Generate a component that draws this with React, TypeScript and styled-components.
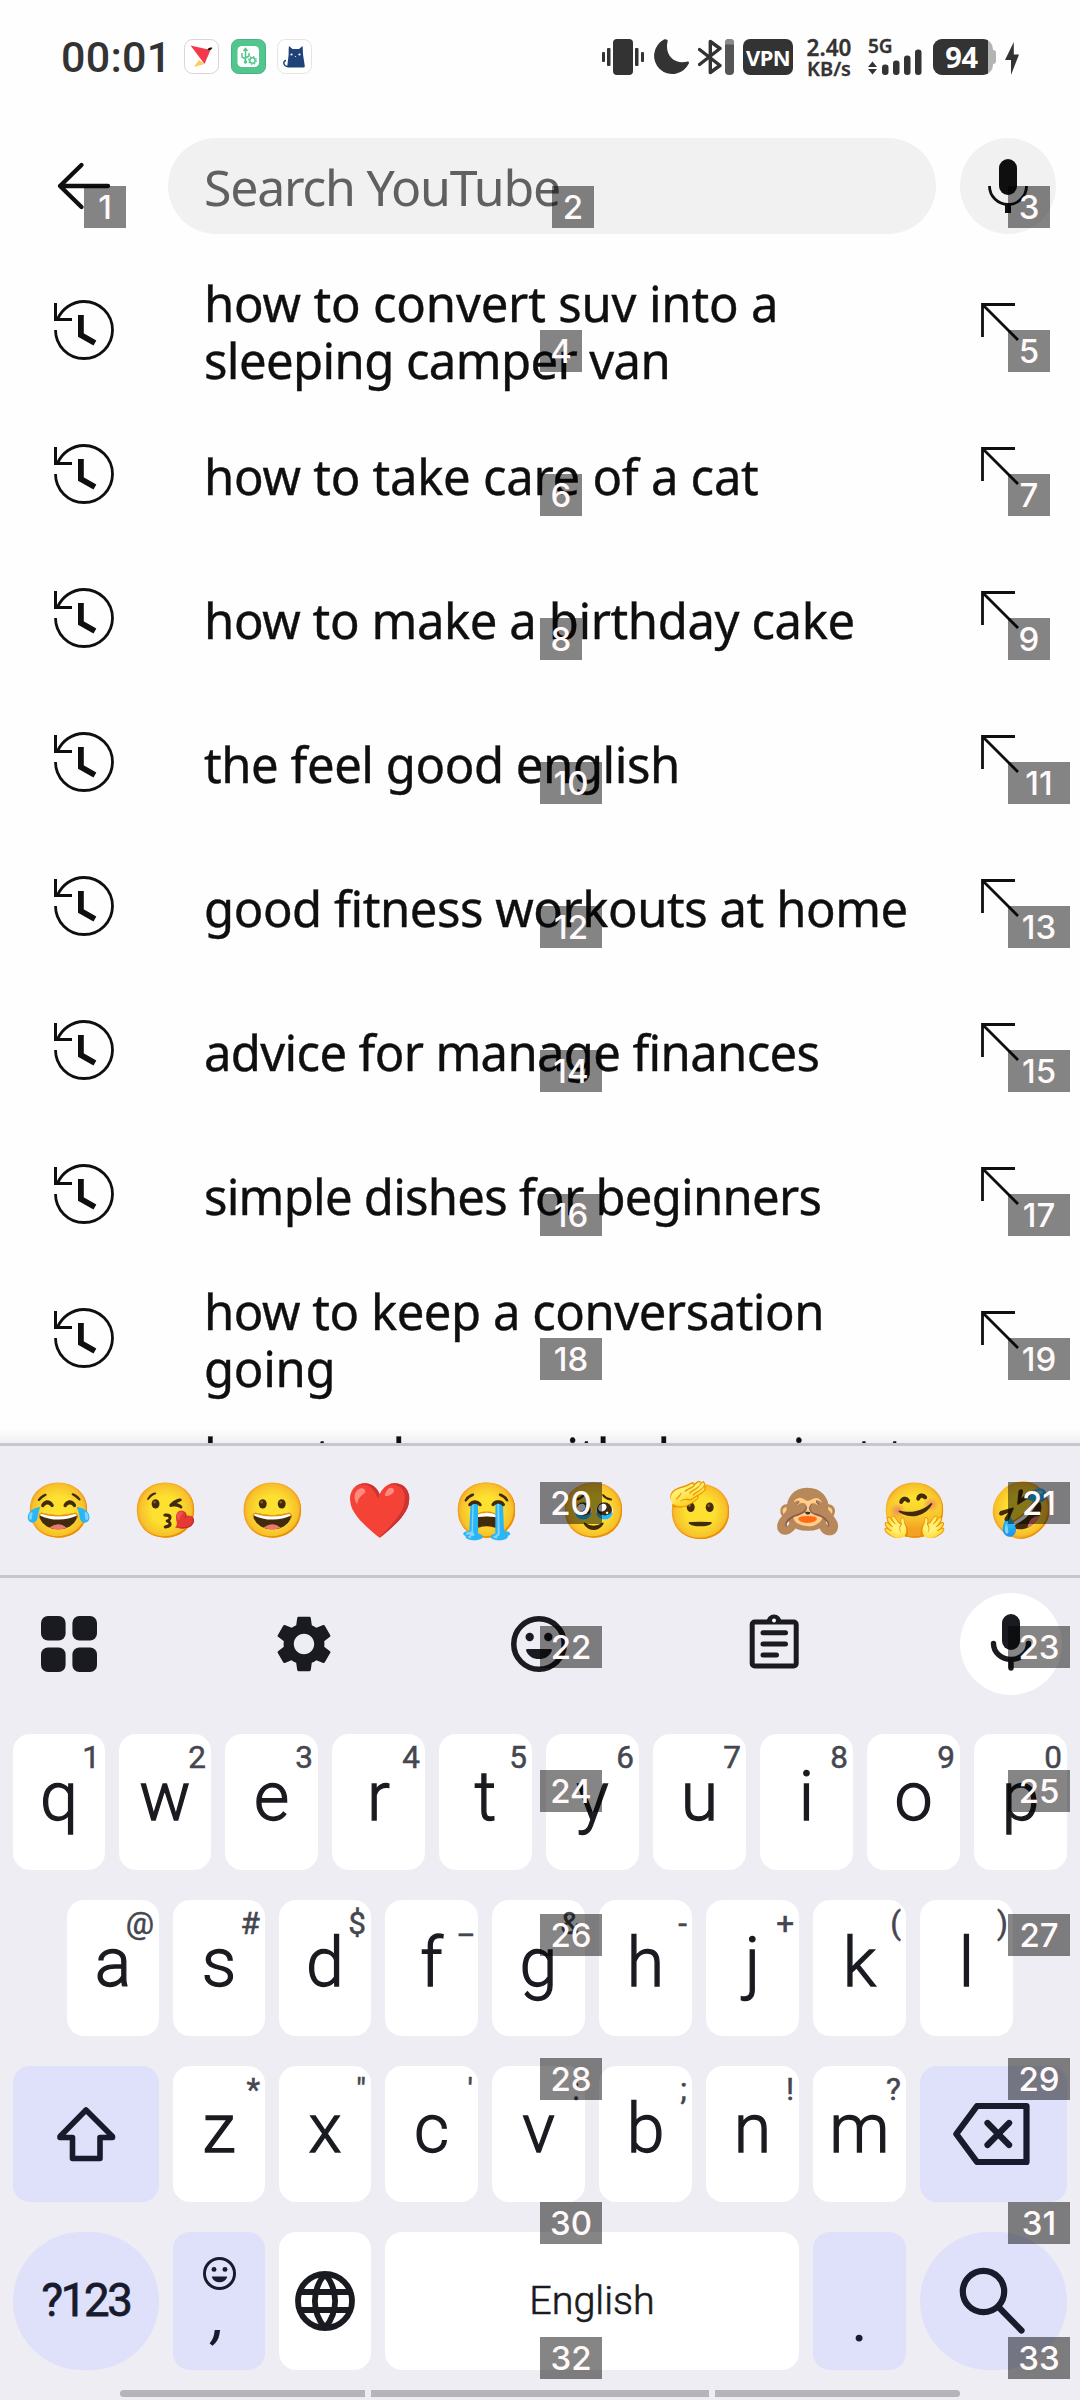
import React from 'react';
import styled, { createGlobalStyle } from 'styled-components';
import { MdSettings } from 'react-icons/md';

const GlobalStyle = createGlobalStyle`
  * { box-sizing: border-box; }
  html, body { margin: 0; padding: 0; background: #fff; }
  svg { display: block; flex: none; }
`;

const Screen = styled.main`
  position: relative;
  width: 1080px;
  height: 2400px;
  display: flex;
  flex-direction: column;
  overflow: hidden;
  background: #fefefe;
  color: #0f0f0f;
  font-family: 'Noto Sans', sans-serif;
`;

/* ---------- status bar ---------- */

const StatusBar = styled.header`
  height: 114px;
  padding: 39px 61px 0 61px;
  display: flex;
  align-items: flex-start;
  color: #333;
`;

const Clock = styled.div`
  width: 123px;
  font: 500 43px/36px Roboto, sans-serif;
  letter-spacing: 0.3px;
`;

const AppIcons = styled.div`
  display: flex;
  gap: 11.5px;
`;

const StatusIcons = styled.div`
  flex: 1;
  display: flex;
  justify-content: flex-end;
  align-items: flex-start;
  height: 36px;
`;

const StatusItem = styled.div<{ $gap: number }>`
  margin-left: ${(p) => p.$gap}px;
`;

const VpnTag = styled.div`
  width: 50px;
  height: 36px;
  border-radius: 7px;
  background: #333;
  color: #fff;
  font: 700 22px/36px 'Noto Sans', sans-serif;
  letter-spacing: -0.6px;
  text-align: center;
`;

const Speed = styled.div`
  width: 48px;
  display: flex;
  flex-direction: column;
  align-items: center;
  font: 600 22.5px/17px 'Noto Sans', sans-serif;
  -webkit-text-stroke: 0.3px #333;
  span + span { font-size: 20px; line-height: 20px; margin-top: 3px; }
`;

const Signal = styled.div`
  width: 54px;
  height: 36px;
  display: flex;
  flex-direction: column;
  justify-content: space-between;
  font: 600 19px/14px 'Noto Sans', sans-serif;
  -webkit-text-stroke: 0.3px #333;
  svg { margin-top: -4px; }
`;

const Battery = styled.div`
  display: flex;
  align-items: center;
  height: 36px;
`;

const BatteryShell = styled.div`
  width: 60px;
  height: 36px;
  border-radius: 9px 10px 10px 9px;
  overflow: hidden;
  background: #b3b3b3;
`;

const BatteryFill = styled.div`
  width: 55px;
  height: 36px;
  padding-left: 2px;
  background: #333;
  color: #fff;
  font: 700 29px/36px 'Noto Sans', sans-serif;
  letter-spacing: -0.4px;
  text-align: center;
`;

const BatteryNub = styled.div`
  width: 3px;
  height: 14px;
  border-radius: 0 3px 3px 0;
  background: #b3b3b3;
`;

/* ---------- search header ---------- */

const SearchHeader = styled.div`
  height: 144px;
  padding: 24px 24px 24px 48px;
  display: flex;
  align-items: center;
`;

const SearchField = styled.div`
  width: 768px;
  height: 96px;
  margin: 0 24px 0 48px;
  padding-left: 36px;
  border-radius: 48px;
  background: #f1f1f1;
  color: #606060;
  font-size: 50px;
  line-height: 98px;
  letter-spacing: -1.25px;
  white-space: nowrap;
`;

const VoiceButton = styled.div`
  width: 96px;
  height: 96px;
  border-radius: 50%;
  background: #f1f1f1;
`;

/* ---------- suggestions ---------- */

const Suggestions = styled.div`
  position: relative;
  height: 1185px;
  overflow: hidden;
`;

const SuggestionRow = styled.div`
  height: 144px;
  padding: 0 36px 0 48px;
  display: flex;
  align-items: center;
`;

const SuggestionText = styled.div`
  width: 732px;
  margin: 0 36px 0 84px;
  padding-top: 4px;
  font-size: 49px;
  line-height: 57px;
  white-space: pre;
  -webkit-text-stroke: 0.4px #0f0f0f;
`;

const Line = styled.div<{ $track: number }>`
  min-height: 57px;
  letter-spacing: ${(p) => p.$track}px;
`;

const Shade = styled.div`
  position: absolute;
  left: 0;
  right: 0;
  bottom: 0;
  height: 15px;
  background: linear-gradient(rgba(0, 0, 0, 0), rgba(0, 0, 0, 0.06));
`;

/* ---------- keyboard ---------- */

const Keyboard = styled.section`
  height: 957px;
  display: flex;
  flex-direction: column;
  background: #eeedf3;
  border-top: 3px solid #c6c6d1;
  color: #1a1b20;
`;

const EmojiStrip = styled.div`
  height: 132px;
  padding: 0 5px 0 6px;
  display: grid;
  grid-template-columns: repeat(10, 1fr);
  border-bottom: 3px solid #c6c6d1;
`;

const Emoji = styled.span`
  display: flex;
  align-items: center;
  justify-content: center;
  font: 54px/60px 'Noto Color Emoji', sans-serif;
`;

const Toolbar = styled.div`
  height: 156px;
  padding: 15px 18px 0;
  display: flex;
  gap: 133px;
`;

const Tool = styled.div<{ $filled?: boolean }>`
  width: 102px;
  height: 102px;
  margin-left: ${(p) => (p.$filled ? 'auto' : '0')};
  display: flex;
  align-items: center;
  justify-content: center;
  border-radius: 50%;
  background: ${(p) => (p.$filled ? '#fff' : 'transparent')};
`;

const KeyRows = styled.div`
  display: flex;
  flex-direction: column;
  gap: 30px;
`;

const KeyRow = styled.div<{ $inset?: number }>`
  display: flex;
  gap: 14px;
  padding: 0 ${(p) => p.$inset ?? 13}px;
`;

const Key = styled.div<{ $width?: number; $tinted?: boolean; $round?: boolean; $tall?: boolean }>`
  position: relative;
  flex: ${(p) => (p.$width ? 'none' : '1 1 0')};
  width: ${(p) => (p.$width ? `${p.$width}px` : 'auto')};
  height: ${(p) => (p.$tall ? 138 : 136)}px;
  border-radius: ${(p) => (p.$round ? 69 : 17)}px;
  background: ${(p) => (p.$tinted ? '#dfe0fa' : '#fff')};
  display: flex;
  align-items: center;
  justify-content: center;
`;

const Letter = styled.span`
  padding-bottom: 10px;
  font: 300 68px/80px Roboto, sans-serif;
  -webkit-text-stroke: 1.3px #1a1b20;
`;

const Hint = styled.span`
  position: absolute;
  top: 8px;
  right: 5px;
  color: #45464f;
  font: 400 31.5px/32px Roboto, sans-serif;
  -webkit-text-stroke: 0.5px #45464f;
`;

const SymbolsLabel = styled.span`
  font: 400 45.5px/54px Roboto, sans-serif;
  letter-spacing: -2.3px;
  color: #171b2c;
  -webkit-text-stroke: 0.8px #171b2c;
`;

const SpaceLabel = styled.span`
  font: 300 39.5px/46px Roboto, sans-serif;
  -webkit-text-stroke: 0.6px #1a1b20;
`;

const PunctuationStack = styled.div`
  height: 138px;
  padding-top: 25px;
  display: flex;
  flex-direction: column;
  align-items: center;
  color: #171b2c;
`;

const Punctuation = styled.span<{ $top: number; $slant?: boolean }>`
  margin-top: ${(p) => p.$top}px;
  font: ${(p) => (p.$slant ? 'italic' : 'normal')} 400 62px/40px Roboto, sans-serif;
`;

const NavBar = styled.div`
  margin-top: 20px;
  padding: 0 120px;
  display: flex;
  gap: 6px;
`;

const NavSegment = styled.div<{ $width: number; $left?: number; $right?: number }>`
  width: ${(p) => p.$width}px;
  height: 7px;
  background: #b5b4ba;
  border-radius: ${(p) => `${p.$left ?? 0}px ${p.$right ?? 0}px ${p.$right ?? 0}px ${p.$left ?? 0}px`};
`;

/* ---------- numbered tags ---------- */

const Tag = styled.span<{ $x: number; $y: number; $w: number }>`
  position: absolute;
  left: ${(p) => p.$x}px;
  top: ${(p) => p.$y}px;
  width: ${(p) => p.$w}px;
  height: 42px;
  background: rgba(0, 0, 0, 0.48);
  color: #fff9f9;
  font: 500 33px/43px Inter, sans-serif;
  text-align: center;
`;

const HistoryIcon = () => (
  <svg width="72" height="72" viewBox="48 294 72 72" fill="none" stroke="#0f0f0f">
    <path d="M55.5 330a28.5 28.5 0 1 0 28.5-28.5c-11.8 0-22.2 7.4-26.6 18" strokeWidth="2.8" />
    <path d="M55.5 303v16.5H72" strokeWidth="3" />
    <path d="M80.9 315v20l14 8" strokeWidth="5.8" />
  </svg>
);

const InsertIcon = () => (
  <svg width="72" height="72" viewBox="972 294 72 72" fill="none" stroke="#0f0f0f" strokeWidth="2.8">
    <path d="M982.5 337v-32.5H1015M982.5 304.5l35.5 35.5" />
  </svg>
);

const SmileIcon = ({ size, stroke }: { size: number; stroke: number }) => (
  <svg width={size} height={size} viewBox="-28 -28 56 56">
    <circle r={28 - stroke / 2} fill="none" stroke="currentColor" strokeWidth={stroke} />
    <circle cx="-9.3" cy="-7" r="4.2" fill="currentColor" />
    <circle cx="9.3" cy="-7" r="4.2" fill="currentColor" />
    <path d="M-11.6 5h23.2c1.2 0 1.6.8 1.2 1.9C10.6 12 6 15 0 15s-10.600-3-12.800-8.100c-.4-1.100 0-1.900 1.200-1.900z" fill="currentColor" />
  </svg>
);

const suggestions: [string, number][][] = [
  [['how to convert suv into a', -0.18], ['sleeping camper van', -0.6]],
  [['how to take care of a cat', -0.25]],
  [['how to make a birthday cake', -0.4]],
  [['the feel good english', -0.45]],
  [['good fitness workouts at home', -0.45]],
  [['advice for manage finances', -0.65]],
  [['simple dishes for beginners', -0.75]],
  [['how to keep a conversation', -0.47], ['going', -0.3]],
  [['how to dance with do project to', 0.12], ['', 0]],
];

const emojis = ['😂', '😘', '😀', '❤️', '😭', '🥹', '🫡', '🙈', '🤗', '🤣'];

const rowOne = ['q1', 'w2', 'e3', 'r4', 't5', 'y6', 'u7', 'i8', 'o9', 'p0'];
const rowTwo = ['a@', 's#', 'd$', 'f_', 'g&', 'h-', 'j+', 'k(', 'l)'];
const rowThree = ['z*', 'x"', "c'", 'v:', 'b;', 'n!', 'm?'];

const tags: { n: number; x: number; y: number }[] = [
  { n: 1, x: 84, y: 186 },
  { n: 2, x: 552, y: 186 },
  { n: 3, x: 1008, y: 186 },
  ...Array.from({ length: 28 }, (_, i) => ({
    n: i + 4,
    x: i % 2 === 0 ? 540 : 1008,
    y: 330 + Math.floor(i / 2) * 144,
  })),
  { n: 32, x: 540, y: 2337 },
  { n: 33, x: 1008, y: 2337 },
];

const LetterKey = ({ def, width }: { def: string; width: number }) => (
  <Key $width={width}>
    <Letter>{def[0]}</Letter>
    <Hint>{def[1]}</Hint>
  </Key>
);

export default function App() {
  return (
    <Screen>
      <GlobalStyle />
      <StatusBar>
        <Clock>00:01</Clock>
        <AppIcons>
          <svg width="35" height="35" viewBox="0 0 35 35">
            <rect x=".5" y=".5" width="34" height="34" rx="8" fill="#fff" stroke="#d6d6d6" />
            <path d="M6.500 6.500 26.500 11 20.500 25z" fill="#f23a4c" />
            <path d="M15 21l5.500 4-10.500 3z" fill="#fccb5a" />
            <path d="M23.500 11c1-2.500 3-3 5-2l-2 2z" fill="#111" />
          </svg>
          <svg width="35" height="35" viewBox="0 0 35 35">
            <rect x=".5" y=".5" width="34" height="34" rx="7" fill="#53c690" stroke="#47b380" />
            <rect x="6.500" y="7" width="21.500" height="21" rx="4.500" fill="#fff" />
            <g fill="none" stroke="#53c690" strokeWidth="1.500">
              <path d="M14.500 24V10M12.500 12l2-2.500 2 2.500M11 14v4l3.500 2M18 14v3l-3.500 2" />
              <circle cx="14.500" cy="23" r="1" />
              <circle cx="21.500" cy="21.500" r="2.700" />
              <circle cx="21.500" cy="21.500" r="3.900" strokeDasharray="1.500 1.560" strokeWidth="1.200" />
            </g>
          </svg>
          <svg width="35" height="35" viewBox="0 0 35 35">
            <rect x=".5" y=".5" width="34" height="34" rx="8" fill="#fff" stroke="#e4e4e4" />
            <path d="M12 7l3.500 3h6.500L25.500 7c.4 2 .3 5 .6 9l1.700 11c0 1-.6 1.500-1.800 1.500H11.500c-1 0-1.300-.5-1.200-1.500l1.300-11c.1-4 0-7 .4-9z" fill="#1f4379" />
            <path d="M9 21.500c-3 0-3.500 6 2.500 6" fill="none" stroke="#1f4379" strokeWidth="1.500" />
            <circle cx="14.500" cy="15.500" r="1.100" fill="#fff" />
            <circle cx="22.500" cy="15.500" r="1.100" fill="#fff" />
            <circle cx="18.500" cy="17.500" r=".6" fill="#fff" />
          </svg>
        </AppIcons>
        <StatusIcons>
          <StatusItem $gap={0}>
            <svg width="42" height="36" viewBox="0 0 42 36" fill="#333">
              <rect x="11" width="20" height="36" rx="4" />
              <rect x="5" y="9" width="3.500" height="18" rx="1" />
              <rect x="0" y="13" width="3" height="10" rx="1" />
              <rect x="33" y="9" width="3.500" height="18" rx="1" />
              <rect x="39" y="13" width="3" height="10" rx="1" />
            </svg>
          </StatusItem>
          <StatusItem $gap={9}>
            <svg width="36" height="36" viewBox="0 0 36 36">
              <path d="M14 .8C12.400 0 12.500 0 11 .6A18.200 18.200 0 1 0 35.800 24.500c.5-1.400-.2-2.300-2-1.800C20.500 25.500 11.500 15 14.600 2.500c.2-1 0-1.500-.6-1.700z" fill="#333" />
            </svg>
          </StatusItem>
          <StatusItem $gap={9}>
            <svg width="36" height="36" viewBox="0 0 36 36">
              <path d="M1.500 10.500 22 26.500 12.300 33.500V2.500L22 9.500 1.500 25.500" fill="none" stroke="#333" strokeWidth="3.400" strokeLinejoin="round" strokeLinecap="round" />
              <rect x="27" width="9" height="36" rx="4" fill="#555" />
              <path d="M27 5.500V4a4 4 0 0 1 4-4h1a4 4 0 0 1 4 4v1.500z" fill="#8a8a8a" />
            </svg>
          </StatusItem>
          <StatusItem $gap={9}>
            <VpnTag>VPN</VpnTag>
          </StatusItem>
          <StatusItem $gap={12}>
            <Speed>
              <span>2.40</span>
              <span>KB/s</span>
            </Speed>
          </StatusItem>
          <StatusItem $gap={15}>
            <Signal>
              <span>5G</span>
              <svg width="54" height="26" viewBox="0 0 54 26" fill="#333">
                <path d="M0 18l4.500-5.500L9 18zM0 20h9l-4.500 5.500z" />
                <rect x="14" y="15.500" width="6.500" height="10.500" rx="3" />
                <rect x="25" y="11.500" width="6.500" height="14.500" rx="3" />
                <rect x="36" y="6.500" width="6.500" height="19.500" rx="3" />
                <rect x="47" y="0.500" width="6.500" height="25.500" rx="3" />
              </svg>
            </Signal>
          </StatusItem>
          <StatusItem $gap={11}>
            <Battery>
              <BatteryShell>
                <BatteryFill>94</BatteryFill>
              </BatteryShell>
              <BatteryNub />
            </Battery>
          </StatusItem>
          <StatusItem $gap={9}>
            <svg width="14" height="36" viewBox="0 0 14 36">
              <path d="M8.800 3v12.500H14L6 36V21H0z" fill="#333" />
            </svg>
          </StatusItem>
        </StatusIcons>
      </StatusBar>

      <SearchHeader>
        <svg width="72" height="72" viewBox="48 150 72 72" fill="none" stroke="#0f0f0f" strokeWidth="4.300" strokeLinecap="round" strokeLinejoin="round">
          <path d="M81.500 165 60 186l21.500 21M60 186h48" />
        </svg>
        <SearchField>Search YouTube</SearchField>
        <VoiceButton>
          <svg width="96" height="96" viewBox="960 138 96 96">
            <rect x="999" y="159" width="18" height="36" rx="9" fill="#0f0f0f" />
            <path d="M989.500 186a18.500 18.500 0 0 0 37 0" fill="none" stroke="#0f0f0f" strokeWidth="2.800" />
            <path d="M1005 204h6v9h-6z" fill="#0f0f0f" />
          </svg>
        </VoiceButton>
      </SearchHeader>

      <Suggestions>
        {suggestions.map((lines) => (
          <SuggestionRow key={lines[0][0]}>
            <HistoryIcon />
            <SuggestionText>
              {lines.map(([text, track]) => (
                <Line key={text} $track={track}>
                  {text}
                </Line>
              ))}
            </SuggestionText>
            <InsertIcon />
          </SuggestionRow>
        ))}
        <Shade />
      </Suggestions>

      <Keyboard>
        <EmojiStrip>
          {emojis.map((e) => (
            <Emoji key={e}>{e}</Emoji>
          ))}
        </EmojiStrip>

        <Toolbar>
          <Tool>
            <svg width="56" height="56" viewBox="0 0 56 56" fill="#1a1b20">
              <rect width="24.600" height="24.600" rx="7" />
              <rect x="31.400" width="24.600" height="24.600" rx="7" />
              <rect y="31.400" width="24.600" height="24.600" rx="7" />
              <rect x="31.400" y="31.400" width="24.600" height="24.600" rx="7" />
            </svg>
          </Tool>
          <Tool>
            <MdSettings size={68} />
          </Tool>
          <Tool>
            <SmileIcon size={56} stroke={5.5} />
          </Tool>
          <Tool>
            <svg width="60" height="60" viewBox="744 1614 60 60" fill="none" stroke="#1a1b20" strokeWidth="5">
              <rect x="752.200" y="1622" width="44" height="44" rx="2.500" />
              <path d="M763 1632.800h22.500M763 1644h22.500M763 1655h13.500" strokeLinecap="round" />
              <path d="M766.500 1622a7.500 7.500 0 0 1 15 0z" fill="#1a1b20" stroke="none" />
              <circle cx="774" cy="1620.500" r="2" fill="#fff" stroke="none" />
            </svg>
          </Tool>
          <Tool $filled>
            <svg width="102" height="102" viewBox="960 1593 102 102" fill="none" stroke="#1a1b20" strokeLinecap="round">
              <rect x="1002" y="1614" width="18" height="36" rx="9" fill="#1a1b20" stroke="none" />
              <path d="M993.500 1643.500a17.500 16 0 0 0 35 0M1011 1660v8" strokeWidth="5.400" />
            </svg>
          </Tool>
        </Toolbar>

        <KeyRows>
          <KeyRow>
            {rowOne.map((k, i) => (
              <LetterKey key={k} def={k} width={i < 2 ? 92 : 93} />
            ))}
          </KeyRow>
          <KeyRow $inset={67}>
            {rowTwo.map((k, i) => (
              <LetterKey key={k} def={k} width={i < 3 ? 92 : 93} />
            ))}
          </KeyRow>
          <KeyRow>
            <Key $width={146} $tinted>
              <svg width="72" height="72" viewBox="50 2098 72 72" fill="none" stroke="#171b2c" strokeWidth="5.600" strokeLinejoin="round">
                <path d="M86 2110 60 2136.500v1H72.500V2158.500h27.500V2137.500h12.500v-1z" />
              </svg>
            </Key>
            {rowThree.map((k, i) => (
              <LetterKey key={k} def={k} width={i < 2 ? 92 : 93} />
            ))}
            <Key $width={147} $tinted>
              <svg width="84" height="72" viewBox="951.500 2098 84 72" fill="none" stroke="#171b2c" strokeWidth="6.200" strokeLinejoin="round" strokeLinecap="round">
                <path d="M955.800 2134 976.500 2106h49.500v56h-49.500z" />
                <path d="M987 2123l21.600 22M1008.600 2123l-21.600 22" />
              </svg>
            </Key>
          </KeyRow>
          <KeyRow>
            <Key $width={146} $tinted $round $tall>
              <SymbolsLabel>?123</SymbolsLabel>
            </Key>
            <Key $width={92} $tinted $tall>
              <PunctuationStack>
                <SmileIcon size={33} stroke={5} />
                <Punctuation $top={6} $slant>,</Punctuation>
              </PunctuationStack>
            </Key>
            <Key $width={92} $tall>
              <svg width="60" height="60" viewBox="-30 -30 60 60" fill="none" stroke="#1a1b20" strokeWidth="5.800">
                <circle r="27" />
                <path d="M-26-9h52M-26 9h52" />
                <path d="M0-27c-13.500 16-13.500 38 0 54M0-27c13.500 16 13.500 38 0 54" />
              </svg>
            </Key>
            <Key $tall>
              <SpaceLabel>English</SpaceLabel>
            </Key>
            <Key $width={93} $tinted $tall>
              <PunctuationStack>
                <Punctuation $top={43}>.</Punctuation>
              </PunctuationStack>
            </Key>
            <Key $width={147} $tinted $round $tall>
              <svg width="72" height="72" viewBox="958 2265 72 72" fill="none" stroke="#171b2c" strokeWidth="6.200" strokeLinecap="round">
                <circle cx="983.500" cy="2291.500" r="20.700" />
                <path d="M999.500 2308l22 22.500" />
              </svg>
            </Key>
          </KeyRow>
        </KeyRows>

        <NavBar>
          <NavSegment $width={245} $left={4} />
          <NavSegment $width={338} />
          <NavSegment $width={245} $right={4} />
        </NavBar>
      </Keyboard>

      {tags.map((t) => (
        <Tag key={t.n} $x={t.x} $y={t.y} $w={t.n < 10 ? 42 : 62}>
          {t.n}
        </Tag>
      ))}
    </Screen>
  );
}
